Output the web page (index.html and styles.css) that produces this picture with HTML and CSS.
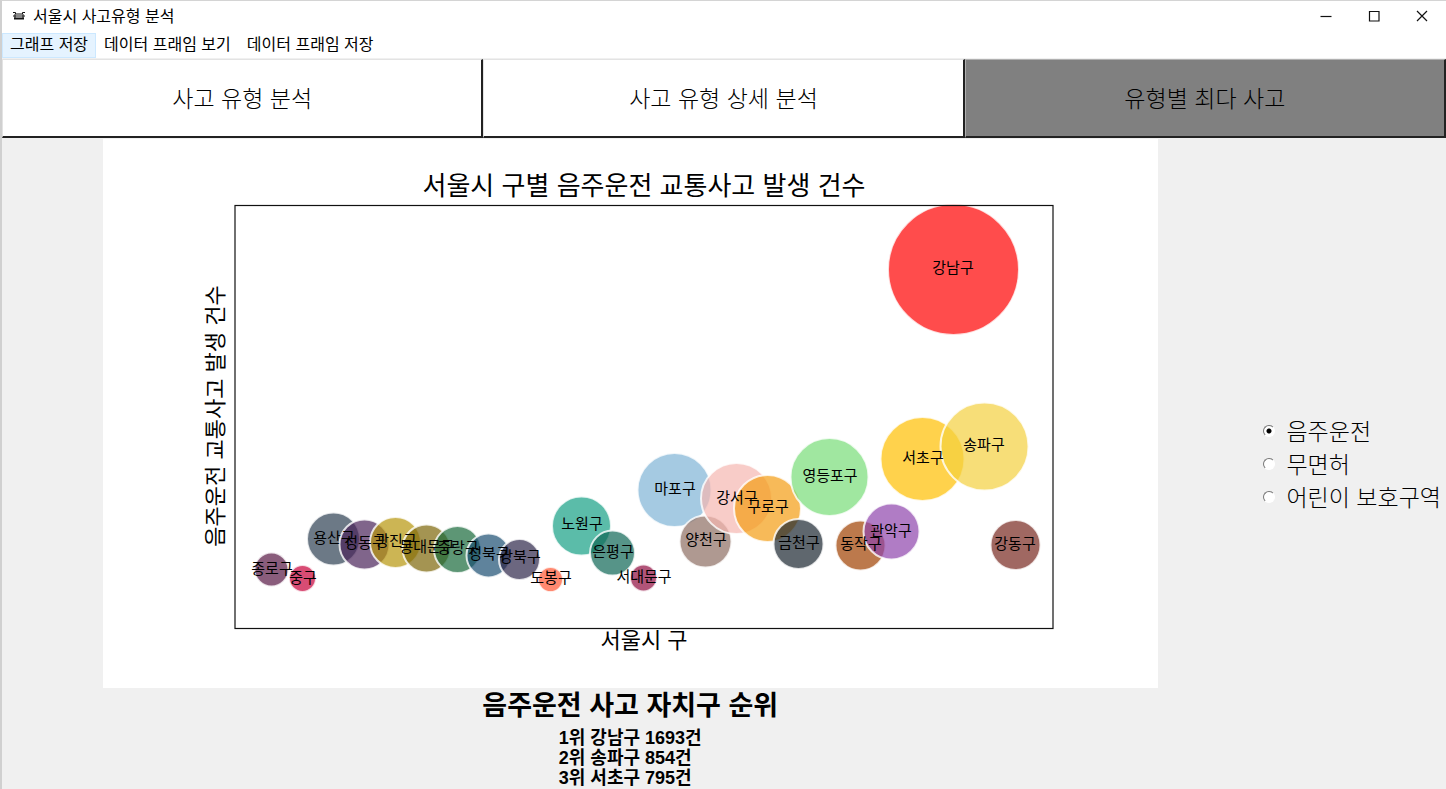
FILE: index.html
```html
<!DOCTYPE html>
<html lang="ko">
<head>
<meta charset="utf-8">
<title>서울시 사고유형 분석</title>
<link rel="stylesheet" href="styles.css">
</head>
<body>
<div class="window">
  <header class="titlebar">
    <svg class="app-icon" width="14" height="12" viewBox="0 0 14 12" aria-hidden="true"><path d="M1 2.500h2.500v1.500h7v-1.500h2.500M3 4v5M11 4v5M1 6h12"/><path class="base" d="M2 8.500h10"/></svg>
    <h1 class="title">서울시 사고유형 분석</h1>
    <div class="controls">
      <button type="button" aria-label="최소화"><svg width="12" height="12" viewBox="0 0 12 12"><path d="M0.500 6.500h11"/></svg></button>
      <button type="button" aria-label="최대화"><svg width="12" height="12" viewBox="0 0 12 12"><path d="M1.500 1.500h9.500v9.500h-9.500z"/></svg></button>
      <button type="button" aria-label="닫기"><svg width="12" height="12" viewBox="0 0 12 12"><path d="M1 1l10 10M11 1l-10 10"/></svg></button>
    </div>
  </header>
  <nav class="menubar">
    <button type="button" class="active">그래프 저장</button>
    <button type="button">데이터 프래임 보기</button>
    <button type="button">데이터 프래임 저장</button>
  </nav>
  <nav class="tabs">
    <button type="button">사고 유형 분석</button>
    <button type="button">사고 유형 상세 분석</button>
    <button type="button" class="selected">유형별 최다 사고</button>
  </nav>
  <main class="content">
    <section class="report">
      <svg class="figure" viewBox="0 0 1055 549" role="img" aria-label="서울시 구별 음주운전 교통사고 발생 건수">
        <text class="chart-title" x="541" y="56">서울시 구별 음주운전 교통사고 발생 건수</text>
        <text class="axis-label" x="541" y="509">서울시 구</text>
        <text class="axis-label" transform="translate(120 277) rotate(-90)">음주운전 교통사고 발생 건수</text>
        <g class="bubbles">
          <circle cx="168.500" cy="430.500" r="17" fill="#581845"/>
          <circle cx="199.500" cy="439.500" r="13.500" fill="#c70039"/>
          <circle cx="230.500" cy="400" r="26.500" fill="#2e4053"/>
          <circle cx="261.500" cy="405.500" r="25" fill="#4a235a"/>
          <circle cx="292.500" cy="403.500" r="25.500" fill="#b7950b"/>
          <circle cx="323.500" cy="409.500" r="24" fill="#7d6608"/>
          <circle cx="354.500" cy="410.500" r="23.500" fill="#186a3b"/>
          <circle cx="385.500" cy="416.500" r="22" fill="#1b4f72"/>
          <circle cx="416.500" cy="420.500" r="20.500" fill="#2d264a"/>
          <circle cx="447.500" cy="440.500" r="12.500" fill="#ff5733"/>
          <circle cx="478.500" cy="387" r="29.500" fill="#16a085"/>
          <circle cx="509.500" cy="414" r="22.500" fill="#0e6655"/>
          <circle cx="540.500" cy="439" r="13.500" fill="#900c3f"/>
          <circle cx="571.500" cy="351" r="37" fill="#7fb3d5"/>
          <circle cx="602.500" cy="402.500" r="26" fill="#8d6e63"/>
          <circle cx="633.500" cy="359.500" r="35.500" fill="#f5b7b1"/>
          <circle cx="664.500" cy="369.500" r="33.500" fill="#f39c12"/>
          <circle cx="695.500" cy="405" r="25" fill="#1b2631"/>
          <circle cx="726.500" cy="338" r="39" fill="#77dd77"/>
          <circle cx="757.500" cy="406.500" r="25" fill="#a04000"/>
          <circle cx="788.500" cy="392.500" r="28" fill="#8e44ad"/>
          <circle cx="819.500" cy="320" r="42" fill="#ffbf00"/>
          <circle cx="850.500" cy="130.500" r="65.500" fill="#ff0000"/>
          <circle cx="881.500" cy="307.500" r="44" fill="#f4d03f"/>
          <circle cx="912.500" cy="406" r="25" fill="#78281f"/>
        </g>
        <rect class="frame" x="132" y="66.500" width="818" height="423"/>
        <g class="labels">
          <text x="169" y="435">종로구</text>
          <text x="200" y="444">중구</text>
          <text x="231" y="404">용산구</text>
          <text x="262" y="409">성동구</text>
          <text x="293" y="407">광진구</text>
          <text x="324" y="413">동대문구</text>
          <text x="355" y="414">중랑구</text>
          <text x="386" y="420">성북구</text>
          <text x="417" y="423">강북구</text>
          <text x="448" y="444">도봉구</text>
          <text x="479" y="390">노원구</text>
          <text x="510" y="418">은평구</text>
          <text x="541" y="443">서대문구</text>
          <text x="572" y="355">마포구</text>
          <text x="603" y="406">양천구</text>
          <text x="634" y="364">강서구</text>
          <text x="665" y="373">구로구</text>
          <text x="696" y="409">금천구</text>
          <text x="727" y="342">영등포구</text>
          <text x="758" y="410">동작구</text>
          <text x="788" y="397">관악구</text>
          <text x="820" y="324">서초구</text>
          <text x="850" y="134">강남구</text>
          <text x="881" y="311">송파구</text>
          <text x="912" y="410">강동구</text>
        </g>
      </svg>
      <h2 class="rank-title">음주운전 사고 자치구 순위</h2>
      <ul class="rank">
        <li>1위 강남구 1693건</li>
        <li>2위 송파구 854건</li>
        <li>3위 서초구 795건</li>
      </ul>
    </section>
    <aside class="options">
      <label><input type="radio" name="kind" checked>음주운전</label>
      <label><input type="radio" name="kind">무면허</label>
      <label><input type="radio" name="kind">어린이 보호구역</label>
    </aside>
  </main>
</div>
</body>
</html>
```
FILE: styles.css
```css
* { box-sizing: border-box; }
body {
  margin: 0;
  background: #f0f0f0;
  color: #000;
  font-family: "Noto Sans CJK KR", sans-serif;
}
button {
  margin: 0;
  padding: 0;
  border: 0;
  background: none;
  color: inherit;
  font: inherit;
}
.window {
  display: flex;
  flex-direction: column;
  min-height: 100vh;
  border-top: 1px solid #d4d4d4;
  border-left: 2px solid #d0d0d0;
}
.titlebar {
  display: flex;
  align-items: center;
  height: 32px;
  padding-left: 10px;
  padding-bottom: 2px;
  background: #fff;
}
.app-icon {
  margin-right: 7px;
  fill: none;
  stroke: #111;
  stroke-width: 1;
}
.app-icon .base { stroke-width: 2; }
.title {
  flex: 1;
  margin: 0;
  padding-bottom: 2px;
  font-size: 16px;
  font-weight: 400;
  line-height: 24px;
}
.controls { display: flex; }
.controls button {
  display: flex;
  align-items: center;
  justify-content: center;
  width: 48px;
  height: 30px;
}
.controls svg {
  fill: none;
  stroke: #111;
  stroke-width: 1.2;
}
.menubar {
  display: flex;
  height: 26px;
  background: #fff;
  border-bottom: 1px solid #f0f0f0;
}
.menubar button {
  padding: 0 7px 4px;
  border: 1px solid transparent;
  font-size: 16px;
  line-height: 19px;
}
.menubar .active {
  background: #e5f3ff;
  border-color: #cce8ff;
}
.tabs {
  display: grid;
  grid-template-columns: repeat(3, 1fr);
}
.tabs button {
  height: 79px;
  padding-bottom: 3px;
  border: 1px solid #e3e3e3;
  border-right: 2px solid #222;
  border-bottom: 2px solid #222;
  background: #fff;
  font-size: 23px;
  font-weight: 300;
}
.tabs .selected {
  background: #808080;
  border-top-color: #b0b0b0;
  border-left-color: #b0b0b0;
}
.content {
  display: flex;
  flex: 1;
}
.report {
  display: flex;
  flex: 1;
  flex-direction: column;
  align-items: center;
  min-width: 0;
}
.figure {
  display: block;
  width: 100%;
  max-width: 1055px;
  height: auto;
  margin-top: 1px;
  background: #fff;
}
.figure text { text-anchor: middle; }
.chart-title { font-size: 26px; }
.axis-label { font-size: 22px; }
.labels { font-size: 15px; }
.bubbles {
  fill-opacity: 0.7;
  stroke: #fff;
  stroke-width: 2;
  stroke-opacity: 0.8;
}
.frame {
  fill: none;
  stroke: #111;
  stroke-width: 1.2;
}
.rank-title {
  margin: 0;
  font-family: "Liberation Sans", "Noto Sans CJK KR", sans-serif;
  font-size: 27px;
  font-weight: 700;
  line-height: 36px;
}
.rank {
  margin: 4px 0 0;
  padding: 0;
  list-style: none;
  font-family: "Liberation Sans", "Noto Sans CJK KR", sans-serif;
  font-size: 18px;
  font-weight: 700;
  line-height: 20px;
}
.options {
  display: flex;
  flex-direction: column;
  justify-content: center;
  padding: 0 5px;
}
.options label {
  display: flex;
  align-items: center;
  gap: 11px;
  font-size: 23px;
  font-weight: 300;
  line-height: 33px;
  white-space: nowrap;
}
.options input {
  appearance: none;
  width: 12px;
  height: 12px;
  margin: 0;
  border: 1px solid;
  border-color: #777 #fff #fff #777;
  border-radius: 50%;
  background: #fff;
}
.options input:checked {
  background: radial-gradient(circle, #000 2px, #fff 3px);
}
```
